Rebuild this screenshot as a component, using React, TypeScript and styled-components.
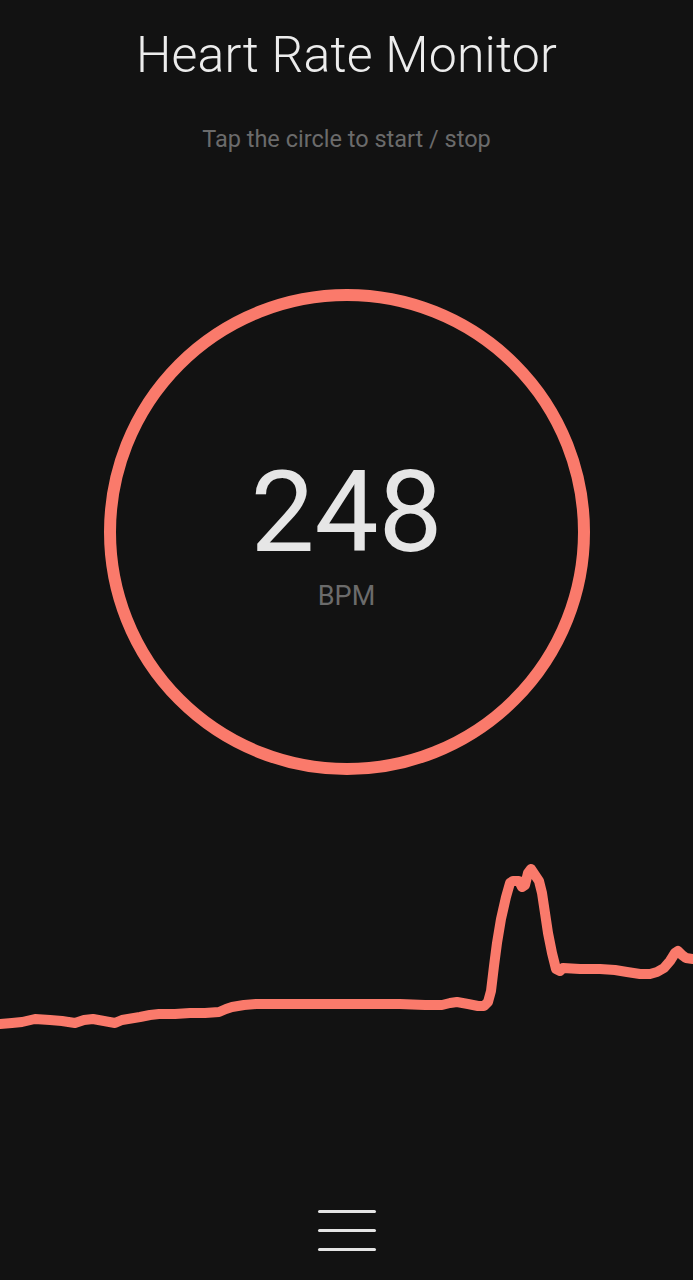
import React, { useState } from 'react';
import styled, { createGlobalStyle } from 'styled-components';

const GlobalStyle = createGlobalStyle`
  html, body {
    margin: 0;
    padding: 0;
    background: #121212;
  }
  body {
    font-family: Roboto, "Noto Sans", "Liberation Sans", sans-serif;
  }
`;

const Screen = styled.div`
  width: 693px;
  height: 1280px;
  background: #121212;
  display: flex;
  flex-direction: column;
  align-items: center;
  overflow: hidden;
`;

const Title = styled.h1`
  margin: 22px 0 0;
  font-size: 50px;
  font-weight: 300;
  line-height: 66px;
  color: #ececec;
  letter-spacing: 0.2px;
`;

const Hint = styled.p`
  margin: 36px 0 0;
  font-size: 23.5px;
  line-height: 30px;
  color: #6b6b6b;
`;

const Ring = styled.button`
  box-sizing: border-box;
  margin-top: 135px;
  width: 486px;
  height: 486px;
  border-radius: 50%;
  border: 12px solid #fa7a6b;
  background: transparent;
  display: flex;
  flex-direction: column;
  align-items: center;
  justify-content: center;
  cursor: pointer;
  padding: 10px 0 0;
  font-family: inherit;
`;

const Rate = styled.span`
  font-size: 114px;
  font-weight: 400;
  line-height: 100px;
  color: #e6e6e6;
`;

const Unit = styled.span`
  margin-top: 18px;
  font-size: 27px;
  line-height: 32px;
  color: #6b6b6b;
`;

const Chart = styled.svg`
  display: block;
  margin-top: 76px;
  width: 693px;
  height: 200px;
`;

const MenuButton = styled.button`
  margin-top: auto;
  margin-bottom: 26px;
  width: 64px;
  height: 48px;
  background: transparent;
  border: none;
  padding: 0;
  display: flex;
  flex-direction: column;
  align-items: center;
  justify-content: center;
  gap: 16px;
  cursor: pointer;
`;

const Bar = styled.span`
  display: block;
  width: 58px;
  height: 3px;
  border-radius: 2px;
  background: #e4e4e4;
`;

const trace: [number, number][] = [
  [0, 173], [12, 172], [22, 171], [35, 168], [50, 169], [62, 170], [75, 172],
  [84, 169], [93, 168], [104, 170], [115, 172], [122, 169], [128, 168],
  [140, 166], [150, 164], [159, 163], [175, 163], [190, 162], [205, 162],
  [219, 161], [226, 158], [232, 156], [244, 154], [256, 153], [280, 153],
  [309, 153], [340, 153], [370, 153], [400, 153], [425, 154], [442, 154],
  [450, 152], [457, 151], [468, 153], [478, 155], [484, 155], [488, 151],
  [491, 140], [494, 115], [497, 92], [501, 68], [506, 46], [510, 32],
  [513, 30], [519, 30], [522, 36], [525, 34], [528, 22], [531, 18],
  [535, 24], [539, 30], [542, 42], [545, 62], [548, 82], [552, 102],
  [556, 118], [560, 120], [563, 117], [580, 118], [600, 118], [615, 119],
  [627, 121], [640, 123], [650, 123], [657, 121], [664, 117], [670, 110],
  [675, 102], [678, 100], [682, 104], [686, 107], [693, 108],
];

export default function App() {
  const [running, setRunning] = useState(true);
  const points = trace.map(([x, y]) => `${x},${y}`).join(' ');

  return (
    <>
      <GlobalStyle />
      <Screen>
        <Title>Heart Rate Monitor</Title>
        <Hint>Tap the circle to start / stop</Hint>
        <Ring onClick={() => setRunning(!running)}>
          <Rate>248</Rate>
          <Unit>BPM</Unit>
        </Ring>
        <Chart viewBox="0 0 693 200">
          <polyline
            points={points}
            fill="none"
            stroke="#fa7a6b"
            strokeWidth={10}
            strokeLinejoin="round"
            strokeLinecap="round"
          />
        </Chart>
        <MenuButton aria-label="menu">
          <Bar />
          <Bar />
          <Bar />
        </MenuButton>
      </Screen>
    </>
  );
}
